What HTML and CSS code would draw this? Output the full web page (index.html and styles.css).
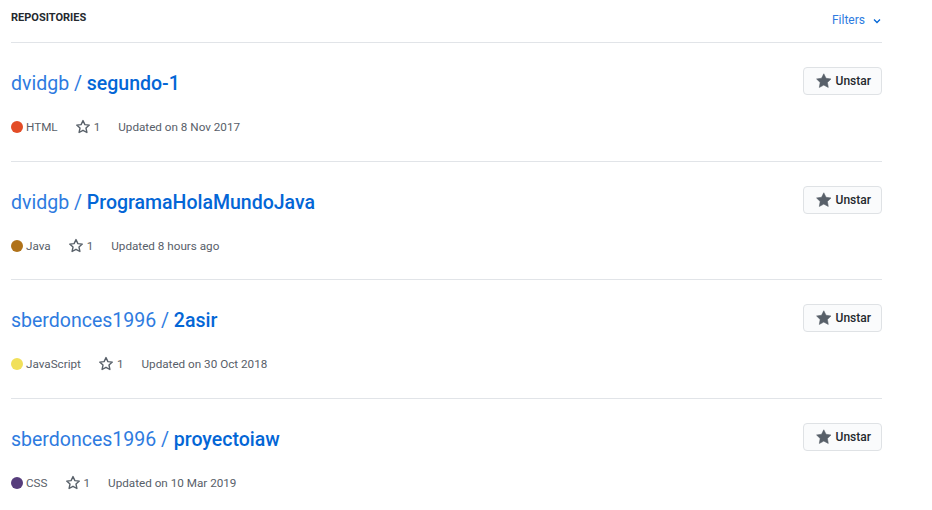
FILE: index.html
```html
<!DOCTYPE html>
<html>
<head>
<meta charset="utf-8">
<link rel="stylesheet" href="styles.css">
</head>
<body>
<div class="page">
  <div class="header">
    <h2 class="title">Repositories</h2>
    <a class="filters">Filters <svg class="chev" width="10" height="10" viewBox="0 0 10 10"><path d="M2 3.5 L5 6.5 L8 3.5" fill="none" stroke="#0366d6" stroke-width="1.3"/></svg></a>
  </div>

  <div class="repo">
    <div class="repo-main">
      <h3 class="repo-name"><a><span class="owner">dvidgb / </span><span class="name">segundo-1</span></a></h3>
      <div class="meta">
        <span class="lang"><span class="dot html"></span>HTML</span>
        <span class="stars"><svg class="star-o" width="16" height="16" viewBox="0 0 16 16"><path d="M8 1.6 L9.9 5.6 L14.3 6.1 L11 9.1 L11.9 13.5 L8 11.3 L4.1 13.5 L5 9.1 L1.7 6.1 L6.1 5.6 Z" fill="none" stroke="#586069" stroke-width="1.4" stroke-linejoin="round"/></svg>1</span>
        <span class="updated">Updated on 8 Nov 2017</span>
      </div>
    </div>
    <button class="btn"><svg width="16" height="16" viewBox="0 0 16 16"><path d="M8 0.6 L10.3 5.2 L15.4 5.9 L11.7 9.5 L12.6 14.6 L8 12.2 L3.4 14.6 L4.3 9.5 L0.6 5.9 L5.7 5.2 Z" fill="#586069" stroke="#586069" stroke-width="0.6" stroke-linejoin="round"/></svg>Unstar</button>
  </div>

  <div class="repo">
    <div class="repo-main">
      <h3 class="repo-name"><a><span class="owner">dvidgb / </span><span class="name">ProgramaHolaMundoJava</span></a></h3>
      <div class="meta">
        <span class="lang"><span class="dot java"></span>Java</span>
        <span class="stars"><svg class="star-o" width="16" height="16" viewBox="0 0 16 16"><path d="M8 1.6 L9.9 5.6 L14.3 6.1 L11 9.1 L11.9 13.5 L8 11.3 L4.1 13.5 L5 9.1 L1.7 6.1 L6.1 5.6 Z" fill="none" stroke="#586069" stroke-width="1.4" stroke-linejoin="round"/></svg>1</span>
        <span class="updated">Updated 8 hours ago</span>
      </div>
    </div>
    <button class="btn"><svg width="16" height="16" viewBox="0 0 16 16"><path d="M8 0.6 L10.3 5.2 L15.4 5.9 L11.7 9.5 L12.6 14.6 L8 12.2 L3.4 14.6 L4.3 9.5 L0.6 5.9 L5.7 5.2 Z" fill="#586069" stroke="#586069" stroke-width="0.6" stroke-linejoin="round"/></svg>Unstar</button>
  </div>

  <div class="repo">
    <div class="repo-main">
      <h3 class="repo-name"><a><span class="owner">sberdonces1996 / </span><span class="name">2asir</span></a></h3>
      <div class="meta">
        <span class="lang"><span class="dot js"></span>JavaScript</span>
        <span class="stars"><svg class="star-o" width="16" height="16" viewBox="0 0 16 16"><path d="M8 1.6 L9.9 5.6 L14.3 6.1 L11 9.1 L11.9 13.5 L8 11.3 L4.1 13.5 L5 9.1 L1.7 6.1 L6.1 5.6 Z" fill="none" stroke="#586069" stroke-width="1.4" stroke-linejoin="round"/></svg>1</span>
        <span class="updated">Updated on 30 Oct 2018</span>
      </div>
    </div>
    <button class="btn"><svg width="16" height="16" viewBox="0 0 16 16"><path d="M8 0.6 L10.3 5.2 L15.4 5.9 L11.7 9.5 L12.6 14.6 L8 12.2 L3.4 14.6 L4.3 9.5 L0.6 5.9 L5.7 5.2 Z" fill="#586069" stroke="#586069" stroke-width="0.6" stroke-linejoin="round"/></svg>Unstar</button>
  </div>

  <div class="repo last">
    <div class="repo-main">
      <h3 class="repo-name"><a><span class="owner">sberdonces1996 / </span><span class="name">proyectoiaw</span></a></h3>
      <div class="meta">
        <span class="lang"><span class="dot css"></span>CSS</span>
        <span class="stars"><svg class="star-o" width="16" height="16" viewBox="0 0 16 16"><path d="M8 1.6 L9.9 5.6 L14.3 6.1 L11 9.1 L11.9 13.5 L8 11.3 L4.1 13.5 L5 9.1 L1.7 6.1 L6.1 5.6 Z" fill="none" stroke="#586069" stroke-width="1.4" stroke-linejoin="round"/></svg>1</span>
        <span class="updated">Updated on 10 Mar 2019</span>
      </div>
    </div>
    <button class="btn"><svg width="16" height="16" viewBox="0 0 16 16"><path d="M8 0.6 L10.3 5.2 L15.4 5.9 L11.7 9.5 L12.6 14.6 L8 12.2 L3.4 14.6 L4.3 9.5 L0.6 5.9 L5.7 5.2 Z" fill="#586069" stroke="#586069" stroke-width="0.6" stroke-linejoin="round"/></svg>Unstar</button>
  </div>
</div>
</body>
</html>
```

FILE: styles.css
```css
* { box-sizing: border-box; }
html, body { margin: 0; padding: 0; background: #fff; }
body {
  font-family: Roboto, "Liberation Sans", Arial, sans-serif;
  color: #24292e;
  font-size: 12px;
}
.page {
  width: 871px;
  margin-left: 11px;
}
.header {
  display: flex;
  justify-content: space-between;
  align-items: flex-start;
  height: 43px;
  padding-top: 10px;
  border-bottom: 1px solid #e1e4e8;
}
.title {
  margin: 0;
  font-size: 11px;
  font-weight: 700;
  text-transform: uppercase;
  line-height: 16px;
  color: #24292e;
}
.filters {
  display: flex;
  align-items: center;
  color: #2e7be0;
  font-size: 12px;
  line-height: 16px;
  margin-top: 2px;
}
.chev { margin-left: 7px; margin-top: 2px; }
.repo {
  display: flex;
  justify-content: space-between;
  align-items: flex-start;
  padding: 26px 0 0;
  height: 118.5px;
  border-bottom: 1px solid #e1e4e8;
}
.repo.last { border-bottom: none; }
.repo-name {
  margin: 0;
  font-size: 19.5px;
  line-height: 30px;
  font-weight: normal;
}
.repo-name a { color: #0366d6; text-decoration: none; }
.owner { font-weight: 400; color: #2e7be0; }
.name { font-weight: 500; }
.meta {
  display: flex;
  align-items: center;
  margin-top: 19px;
  color: #586069;
  font-size: 11.7px;
  line-height: 18px;
}
.lang { display: flex; align-items: center; margin-right: 17px; }
.dot {
  width: 12px; height: 12px; border-radius: 50%;
  display: inline-block; margin-right: 3px;
}
.dot.html { background: #e34c26; }
.dot.java { background: #b07219; }
.dot.js { background: #f1e05a; }
.dot.css { background: #563d7c; }
.stars { display: flex; align-items: center; margin-right: 18px; }
.star-o { margin-right: 3px; }
.btn {
  display: flex;
  align-items: center;
  height: 28px;
  width: 79px;
  margin-top: -2px;
  padding: 0 10px 0 12px;
  background: #fafbfc;
  border: 1px solid #dfe2e5;
  border-radius: 4px;
  font-family: inherit;
  font-size: 12px;
  font-weight: 500;
  color: #24292e;
}
.btn svg { margin-right: 4px; }
```
